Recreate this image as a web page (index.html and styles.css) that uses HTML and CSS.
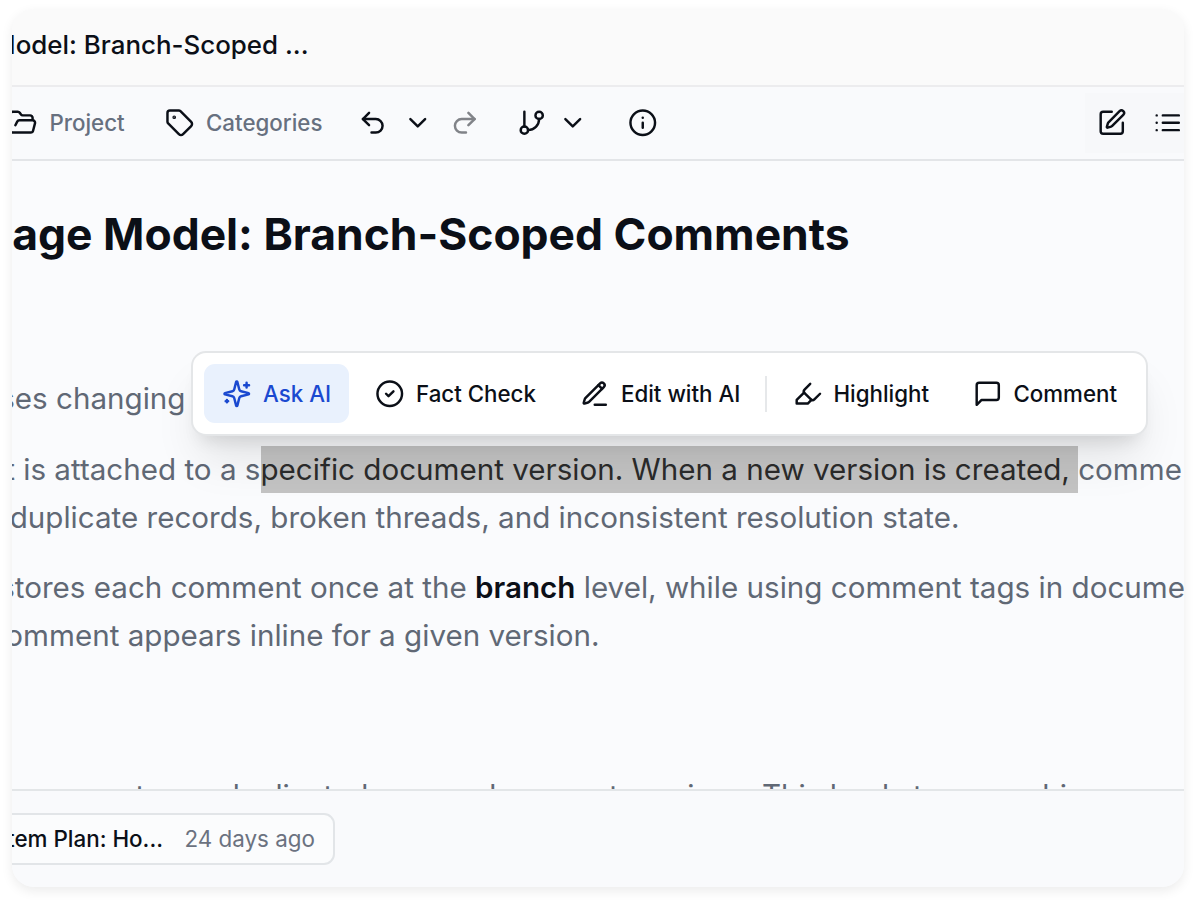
FILE: index.html
```html
<!DOCTYPE html>
<html lang="en">
<head>
<meta charset="utf-8">
<title>Storage Model: Branch-Scoped Comments</title>
<link rel="stylesheet" href="styles.css">
</head>
<body>
<main class="window">
  <header class="titlebar"><span class="lead title-lead">Model: Branch-Scoped ...</span></header>

  <nav class="toolbar">
    <div class="tool project">
      <svg class="icon" viewBox="0 0 24 24"><path d="m6 14 1.5-2.9A2 2 0 0 1 9.24 10H20a2 2 0 0 1 1.94 2.5l-1.54 6a2 2 0 0 1-1.95 1.5H4a2 2 0 0 1-2-2V5a2 2 0 0 1 2-2h3.9a2 2 0 0 1 1.69.9l.81 1.2a2 2 0 0 0 1.67.9H18a2 2 0 0 1 2 2v2"/></svg>
      <span>Project</span>
    </div>
    <div class="tool categories">
      <svg class="icon" viewBox="0 0 24 24"><path d="M12.586 2.586A2 2 0 0 0 11.172 2H4a2 2 0 0 0-2 2v7.172a2 2 0 0 0 .586 1.414l8.704 8.704a2.426 2.426 0 0 0 3.42 0l6.58-6.58a2.426 2.426 0 0 0 0-3.42z"/><circle cx="7.5" cy="7.5" r=".5" fill="currentColor"/></svg>
      <span>Categories</span>
    </div>
    <div class="history">
      <svg class="icon" viewBox="0 0 24 24"><path d="M9 14 4 9l5-5"/><path d="M4 9h10.5a5.5 5.5 0 0 1 0 11H11"/></svg>
      <svg class="icon" viewBox="0 0 24 24"><path d="m6 9 6 6 6-6"/></svg>
      <svg class="icon disabled" viewBox="0 0 24 24"><path d="m15 14 5-5-5-5"/><path d="M20 9H9.5a5.5 5.5 0 0 0 0 11H13"/></svg>
    </div>
    <div class="branching">
      <svg class="icon" viewBox="0 0 24 24"><path d="M6 3v12"/><circle cx="18" cy="6" r="3"/><circle cx="6" cy="18" r="3"/><path d="M18 9a9 9 0 0 1-9 9"/></svg>
      <svg class="icon" viewBox="0 0 24 24"><path d="m6 9 6 6 6-6"/></svg>
    </div>
    <svg class="icon info" viewBox="0 0 24 24"><circle cx="12" cy="12" r="10"/><path d="M12 16v-4"/><path d="M12 8h.01"/></svg>
    <div class="view-tools">
      <svg class="icon" viewBox="0 0 24 24"><path d="M12 3H5a2 2 0 0 0-2 2v14a2 2 0 0 0 2 2h14a2 2 0 0 0 2-2v-7"/><path d="M18.375 2.625a1 1 0 0 1 3 3l-9.013 9.014a2 2 0 0 1-.853.505l-2.873.84a.5.5 0 0 1-.62-.62l.84-2.873a2 2 0 0 1 .506-.852z"/></svg>
      <svg class="icon" viewBox="0 0 24 24"><path d="M3 6h.01M3 12h.01M3 18h.01M8 6h13M8 12h13M8 18h13"/></svg>
    </div>
  </nav>

  <article class="document">
    <h1><span class="lead heading-lead">age Model: Branch-Scoped Comments</span></h1>
    <p class="intro"><span class="lead intro-lead">ses changing</span></p>
    <p><span class="lead select-lead">t is attached to a s</span><mark>pecific document version. When a new version is created, </mark>comme<br><span class="lead second-lead">duplicate records, broken threads, and inconsistent resolution state.</span></p>
    <p><span class="lead branch-lead">stores each comment once at the </span><strong>branch</strong> level, while using comment tags in docume<br><span class="lead fourth-lead">omment appears inline for a given version.</span></p>
    <p class="cut"><span class="lead cut-lead">comments are duplicated across document versions. </span>This leads to worse hiccups</p>
  </article>

  <footer class="footer">
    <div class="chip"><span class="lead chip-lead">tem Plan: Ho...</span><span class="age">24 days ago</span></div>
  </footer>

  <div class="popup">
    <button class="action active">
      <svg class="icon" viewBox="0 0 24 24"><path d="M9.937 15.5A2 2 0 0 0 8.5 14.063l-6.135-1.582a.5.5 0 0 1 0-.962L8.5 9.936A2 2 0 0 0 9.937 8.5l1.582-6.135a.5.5 0 0 1 .963 0L14.063 8.5A2 2 0 0 0 15.5 9.937l6.135 1.581a.5.5 0 0 1 0 .964L15.5 14.063a2 2 0 0 0-1.437 1.437l-1.582 6.135a.5.5 0 0 1-.963 0z"/><path d="M20 3v4M22 5h-4M4 17v2M5 18H3"/></svg>
      <span>Ask AI</span>
    </button>
    <button class="action fact">
      <svg class="icon" viewBox="0 0 24 24"><circle cx="12" cy="12" r="10"/><path d="m9 12 2 2 4-4"/></svg>
      <span>Fact Check</span>
    </button>
    <button class="action edit">
      <svg class="icon" viewBox="0 0 24 24"><path d="M12 21h9"/><path d="M16.376 3.622a1 1 0 0 1 3.002 3.002L7.368 18.635a2 2 0 0 1-.855.506l-2.872.838a.5.5 0 0 1-.62-.62l.838-2.872a2 2 0 0 1 .506-.854z"/><path d="m15 5 3 3"/></svg>
      <span>Edit with AI</span>
    </button>
    <i class="divider"></i>
    <button class="action highlight">
      <svg class="icon" viewBox="0 0 24 24"><path d="m9 11-6 6v3h9l3-3"/><path d="m22 12-4.6 4.6a2 2 0 0 1-2.8 0l-5.2-5.2a2 2 0 0 1 0-2.8L14 4"/></svg>
      <span>Highlight</span>
    </button>
    <button class="action comment">
      <svg class="icon" viewBox="0 0 24 24"><path d="M21 15a2 2 0 0 1-2 2H7l-4 4V5a2 2 0 0 1 2-2h14a2 2 0 0 1 2 2z"/></svg>
      <span>Comment</span>
    </button>
  </div>
</main>
</body>
</html>
```
FILE: styles.css
```css
* { box-sizing: border-box; }

body {
  margin: 0;
  padding: 9px 12px 16px;
  height: 903px;
  overflow: hidden;
  background: #fff;
  color: #0b0f17;
  font-family: Inter, sans-serif;
}

.window {
  position: relative;
  display: flex;
  flex-direction: column;
  width: 1172px;
  height: 878px;
  overflow: hidden;
  border-radius: 22px;
  background: #fafbfd;
  box-shadow: 0 4px 12px rgba(0, 0, 0, .08);
}

.icon {
  flex: none;
  width: 29.5px;
  height: 29.5px;
  fill: none;
  stroke: currentColor;
  stroke-width: 2;
  stroke-linecap: round;
  stroke-linejoin: round;
}

/* Right-anchored text whose beginning scrolls out of view on the left. */
.lead {
  display: inline-flex;
  justify-content: flex-end;
  white-space: pre;
}

.titlebar {
  flex: none;
  height: 78px;
  border-bottom: 2px solid #ececee;
  background: #fafafa;
  font-size: 25.9px;
  font-weight: 500;
  line-height: 72px;
}
.title-lead { width: 296.5px; }

.toolbar {
  display: flex;
  flex: none;
  align-items: center;
  height: 74px;
  border-bottom: 2px solid #e3e5e8;
  background: #f9fafc;
  font-size: 22.3px;
  font-weight: 500;
}
.tool { display: flex; align-items: center; gap: 12px; }
.tool span { position: relative; top: -1px; color: #67707f; }
.project { margin-left: -4px; width: 156.5px; }
.categories { width: 193.5px; }
.history { display: flex; gap: 15px; width: 159px; }
.history .disabled { margin-left: 3px; }
.branching { display: flex; gap: 11px; width: 110.5px; }
.disabled { opacity: .5; }
.view-tools {
  display: flex;
  align-items: center;
  gap: 26px;
  height: 60px;
  margin-left: auto;
  padding: 0 2px 0 12px;
  background: #f7f8fa;
}

.document {
  flex: 1;
  min-height: 0;
  overflow: hidden;
  color: #606875;
  font-size: 29.6px;
  line-height: 48px;
  white-space: nowrap;
}
h1 {
  margin: 42px 0 109px;
  color: #0b0f17;
  font-size: 44.4px;
  font-weight: 700;
  line-height: 62px;
}
p { margin: 0 0 22px; }
.intro { margin-bottom: 23px; }
.heading-lead { width: 837.5px; }
.intro-lead { width: 173.5px; }
.select-lead { width: 248.5px; }
.second-lead { width: 947.5px; }
.branch-lead { width: 463px; }
.fourth-lead { width: 587.5px; }
.cut-lead { width: 750px; }
.cut { margin-top: 112px; }
mark {
  display: inline-block;
  height: 47.5px;
  margin-top: .5px;
  background: #c3c3c3;
  color: #2b2b2b;
  line-height: 47px;
  white-space: pre;
  vertical-align: top;
}
strong { color: #0b0f17; font-weight: 600; }

.footer {
  flex: none;
  height: 98px;
  padding-top: 22px;
  border-top: 2px solid #e3e6e8;
  background: #f9fafc;
}
.chip {
  display: flex;
  align-items: center;
  gap: 21.5px;
  width: 335px;
  height: 52px;
  margin-left: -12px;
  padding: 0 0 2px 12px;
  border: 2px solid #e2e5e8;
  border-radius: 11px;
  background: #fbfcfd;
  font-size: 22.4px;
  font-weight: 500;
}
.chip-lead { width: 149px; }
.age { color: #6b7280; font-weight: 400; }

/* Floating selection menu over the document text. */
.popup {
  position: absolute;
  top: 342px;
  left: 179px;
  display: flex;
  align-items: center;
  width: 957px;
  height: 85px;
  padding-left: 11px;
  border: 2px solid #e4e6e8;
  border-radius: 15px;
  background: #fff;
  box-shadow: 0 30px 46px -9px rgba(0, 0, 0, .1), 0 13px 18px -10px rgba(0, 0, 0, .12);
}
.action {
  display: flex;
  align-items: center;
  gap: 11.5px;
  flex: none;
  height: 59px;
  margin: 0;
  padding: 0 0 0 18px;
  border: 0;
  border-radius: 11px;
  background: none;
  color: #0b0f17;
  font: 500 22.3px Inter, sans-serif;
  white-space: nowrap;
}
.active { width: 145px; margin-right: 8px; background: #e9f1fd; color: #1a49d0; }
.fact { width: 205px; }
.edit { width: 203px; }
.divider { width: 2px; height: 36px; background: #e6e8ea; }
.highlight { width: 180px; margin-left: 7.5px; }
.comment { width: 170px; }
```
